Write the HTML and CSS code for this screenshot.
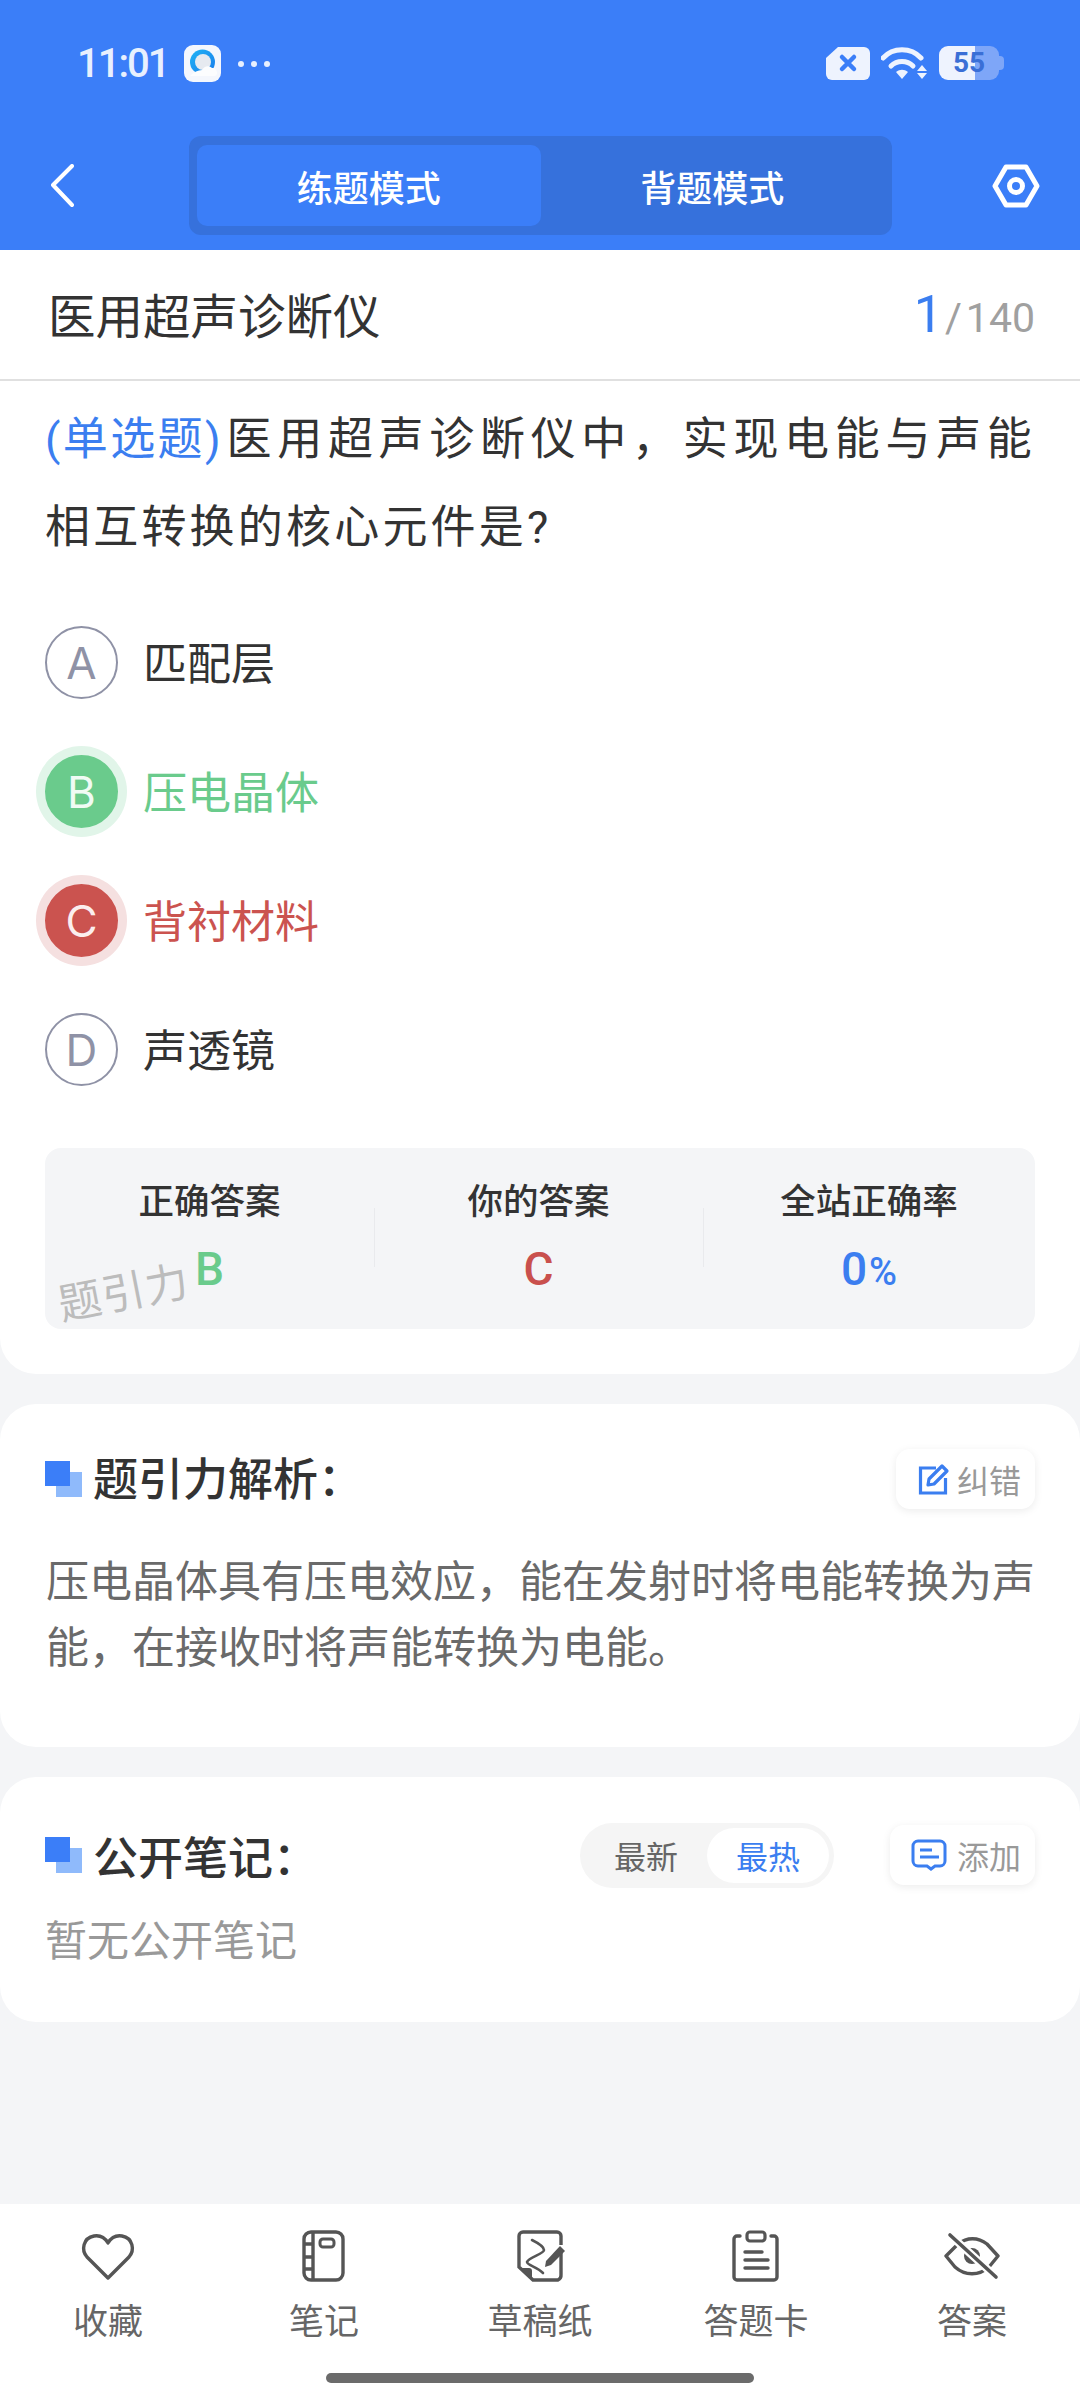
FILE: index.html
```html
<!DOCTYPE html>
<html lang="zh-CN">
<head>
  <meta charset="UTF-8" />
  <title>医用超声诊断仪</title>
  <link rel="stylesheet" href="styles.css">
</head>
<body>

<header class="top">
  <div class="status">
    <div class="status-left">
      <span class="time">11:01</span>
      <svg class="app-icon" width="37" height="37" viewBox="0 0 37 37">
        <defs>
          <linearGradient id="qb" x1="0" y1="0" x2="1" y2="1">
            <stop offset="0" stop-color="#1fb4f5"/>
            <stop offset="1" stop-color="#1a7cec"/>
          </linearGradient>
        </defs>
        <rect width="37" height="37" rx="9" fill="#f4f7fd"/>
        <circle cx="18.5" cy="17" r="12.5" fill="url(#qb)"/>
        <circle cx="19" cy="17" r="8" fill="#e6eaf0"/>
        <path d="M6 31c4-4 8-6 12-6 2-4 7-5 10-2 3 0 5 2 5 5 0 2-1 3-3 3H8z" fill="#fcfdfe"/>
      </svg>
      <span class="dots"><i></i><i></i><i></i></span>
    </div>
    <div class="status-right">
      <svg width="44" height="34" viewBox="0 0 44 34">
        <path d="M12 1h26a6 6 0 0 1 6 6v21a6 6 0 0 1-6 6H6a6 6 0 0 1-6-6V12z" fill="#eef3fe"/>
        <path d="M16 11l12 12M28 11L16 23" stroke="#3b7ef8" stroke-width="4.5" stroke-linecap="round"/>
      </svg>
      <svg width="47" height="34" viewBox="0 0 47 34">
        <path d="M2 12C12 1 30 1 40 12" fill="none" stroke="#eef3fe" stroke-width="5" stroke-linecap="round"/>
        <path d="M10 20c6-6 16-6 22 0" fill="none" stroke="#eef3fe" stroke-width="5" stroke-linecap="round"/>
        <path d="M15 26c4-3 8-3 12 0l-6 7z" fill="#eef3fe"/>
        <path d="M41 19l5 6H36zM36 27h10l-5 6z" fill="#eef3fe"/>
      </svg>
      <div class="battery">55</div>
    </div>
  </div>
  <nav class="nav">
    <svg class="back" width="24" height="44" viewBox="0 0 24 44">
      <path d="M22 2L3 21l19 20" fill="none" stroke="#fff" stroke-width="4" stroke-linecap="round" stroke-linejoin="round"/>
    </svg>
    <div class="seg">
      <div class="seg-item seg-on">练题模式</div>
      <div class="seg-item">背题模式</div>
    </div>
    <svg class="hex" width="48" height="44" viewBox="0 0 48 44">
      <path d="M3 22L14 3h20l11 19-11 19H14z" fill="none" stroke="#fff" stroke-width="5" stroke-linejoin="round"/>
      <circle cx="24" cy="22" r="6.5" fill="none" stroke="#fff" stroke-width="5"/>
    </svg>
  </nav>
</header>

<main class="main">
  <section class="card card-first">
    <div class="title-row">
      <span class="title">医用超声诊断仪</span>
      <span class="count"><b>1</b><em>/</em>140</span>
    </div>
    <div class="question">
      <div class="question-first"><span class="tag">(单选题)</span>医用超声诊断仪中，实现电能与声能</div>
      <div>相互转换的核心元件是?</div>
    </div>
    <ul class="options">
      <li class="option"><span class="letter">A</span>匹配层</li>
      <li class="option right"><span class="letter">B</span>压电晶体</li>
      <li class="option wrong"><span class="letter">C</span>背衬材料</li>
      <li class="option"><span class="letter">D</span>声透镜</li>
    </ul>
    <div class="answer">
      <div class="answer-col">
        <div class="answer-label">正确答案</div>
        <div class="answer-val green">B</div>
      </div>
      <div class="answer-col">
        <div class="answer-label">你的答案</div>
        <div class="answer-val red">C</div>
      </div>
      <div class="answer-col">
        <div class="answer-label">全站正确率</div>
        <div class="answer-val blue">0<small>%</small></div>
      </div>
      <span class="watermark">题引力</span>
    </div>
  </section>

  <section class="card card-analysis">
    <div class="head">
      <h3 class="head-title"><span class="mark"></span>题引力解析：</h3>
      <div class="mini-btn">
        <svg width="32" height="32" viewBox="0 0 32 32">
          <path d="M18 5H2.5v25h25V15" fill="none" stroke="#3b7ef0" stroke-width="3.2"/>
          <path d="M10 22l1-6L24 3l5 5-13 13z" fill="none" stroke="#3b7ef0" stroke-width="3.2" stroke-linejoin="round"/>
        </svg>
        纠错
      </div>
    </div>
    <p class="analysis-text">压电晶体具有压电效应，能在发射时将电能转换为声能，在接收时将声能转换为电能。</p>
  </section>

  <section class="card card-notes">
    <div class="head">
      <h3 class="head-title"><span class="mark"></span>公开笔记：</h3>
      <div class="head-right">
        <div class="sort">
          <span class="sort-item">最新</span>
          <span class="sort-item sort-on">最热</span>
        </div>
        <div class="mini-btn mini-add">
          <svg width="36" height="32" viewBox="0 0 36 32">
            <path d="M7 2h22a5 5 0 0 1 5 5v15a5 5 0 0 1-5 5h-5l-4 3-4-3H7a5 5 0 0 1-5-5V7a5 5 0 0 1 5-5z" fill="none" stroke="#3b7ef0" stroke-width="3"/>
            <path d="M9 11h12M9 18h19" stroke="#3b7ef0" stroke-width="3"/>
          </svg>
          添加
        </div>
      </div>
    </div>
    <p class="empty">暂无公开笔记</p>
  </section>
</main>

<footer class="tabs">
  <div class="tab-row">
    <div class="tab">
      <svg width="56" height="52" viewBox="0 0 56 52">
        <path d="M28 48L7 27C1 20 3 8 14 6c6-1 11 2 14 7 3-5 8-8 14-7 11 2 13 14 7 21z" fill="none" stroke="#555" stroke-width="3.4" stroke-linejoin="round"/>
      </svg>
      <span>收藏</span>
    </div>
    <div class="tab">
      <svg width="56" height="52" viewBox="0 0 56 52">
        <rect x="8" y="2" width="39" height="48" rx="7" fill="none" stroke="#555" stroke-width="3.4"/>
        <path d="M17 2v48M8 14h9M8 27h9M8 39h9" fill="none" stroke="#555" stroke-width="3.4"/>
        <rect x="24" y="9" width="14" height="8" rx="3" fill="none" stroke="#555" stroke-width="3"/>
      </svg>
      <span>笔记</span>
    </div>
    <div class="tab">
      <svg width="56" height="52" viewBox="0 0 56 52">
        <path d="M49 23v22a5 5 0 0 1-3 5H21L7 37V6a4 4 0 0 1 4-4h34a4 4 0 0 1 4 4v9" fill="none" stroke="#555" stroke-width="3.4"/>
        <path d="M8 38h9a3 3 0 0 1 3 3v8z" fill="#555"/>
        <path d="M20 10c6 3 12 7 12 10 0 4-15 7-17 12 0 3 10 5 16 11" fill="none" stroke="#555" stroke-width="2.6" stroke-linecap="round"/>
        <path d="M33 37l1-6 14-15 5 5-14 14z" fill="#555"/>
      </svg>
      <span>草稿纸</span>
    </div>
    <div class="tab">
      <svg width="56" height="52" viewBox="0 0 56 52">
        <path d="M12 6H9a3 3 0 0 0-3 3v38a3 3 0 0 0 3 3h37a3 3 0 0 0 3-3V9a3 3 0 0 0-3-3h-3" fill="none" stroke="#555" stroke-width="3.4" stroke-linecap="round"/>
        <rect x="19" y="2" width="18" height="9" rx="3" fill="none" stroke="#555" stroke-width="3.2"/>
        <path d="M17 22h17M17 30h23M17 38h23" stroke="#555" stroke-width="3.4" stroke-linecap="round"/>
      </svg>
      <span>答题卡</span>
    </div>
    <div class="tab">
      <svg width="56" height="52" viewBox="0 0 56 52">
        <path d="M14 14c9-7 20-7 29 0l11 12-9 11c-10 9-24 9-34 0L2 26z" fill="none" stroke="#555" stroke-width="3.4" stroke-linejoin="round"/>
        <circle cx="28" cy="26" r="8" fill="#555"/>
        <path d="M6 5l46 42" stroke="#fff" stroke-width="8"/>
        <path d="M6 5l46 42" stroke="#555" stroke-width="3.6" stroke-linecap="round"/>
      </svg>
      <span>答案</span>
    </div>
  </div>
  <div class="home-bar"></div>
</footer>

</body>
</html>
```
FILE: styles.css
```css
* {
  box-sizing: border-box;
}

html, body {
  margin: 0;
  padding: 0;
}

body {
  width: 1080px;
  height: 2400px;
  display: flex;
  flex-direction: column;
  background: #f4f5f7;
  font-family: Roboto, "Noto Sans CJK SC", sans-serif;
  color: #333;
  overflow: hidden;
}

/* 顶部蓝色区域 */
.top {
  height: 250px;
  background: #3b7ef8;
}

.status {
  height: 136px;
  padding: 45px 81px 0 77px;
  display: flex;
  justify-content: space-between;
  align-items: flex-start;
}

.status-left, .status-right {
  display: flex;
  align-items: center;
}

.status-left {
  height: 37px;
}

.time {
  font-size: 40px;
  font-weight: 500;
  letter-spacing: -2px;
  color: #e8f0fe;
  width: 107px;
}

.dots {
  display: flex;
  gap: 7px;
  margin-left: 17px;
}

.dots i {
  width: 6px;
  height: 6px;
  border-radius: 50%;
  background: #e8f0fe;
}

.status-right {
  gap: 11px;
  height: 36px;
}

.battery {
  position: relative;
  width: 60px;
  height: 34px;
  border-radius: 9px;
  background: linear-gradient(90deg, #eef3fe 36px, #7ea6f8 36px);
  color: #3a6fd6;
  font-size: 28px;
  font-weight: 700;
  line-height: 34px;
  text-align: center;
}

.battery::after {
  content: "";
  position: absolute;
  right: -5px;
  top: 10px;
  width: 5px;
  height: 14px;
  border-radius: 0 4px 4px 0;
  background: #7ea6f8;
}

.nav {
  display: grid;
  grid-template-columns: 189px 703px 1fr;
  height: 99px;
  align-items: center;
}

.back {
  margin-left: 50px;
}

.hex {
  margin-left: 100px;
}

.seg {
  height: 99px;
  padding: 9px 8px;
  display: flex;
  background: #3671dc;
  border-radius: 12px;
}

.seg-item {
  flex: 1;
  display: flex;
  align-items: center;
  justify-content: center;
  font-size: 36px;
  font-weight: 500;
  color: #fff;
  border-radius: 10px;
}

.seg-on {
  background: #3b7ef8;
}

.main {
  flex: 1;
}

.card {
  background: #fff;
  border-radius: 36px;
  padding: 0 45px;
}

.card-first {
  height: 1124px;
  border-radius: 0 0 36px 36px;
  padding-bottom: 45px;
}

.title-row {
  height: 131px;
  margin: 0 -45px;
  padding: 0 45px 2px 48px;
  border-bottom: 2px solid #e0e0e0;
  display: flex;
  justify-content: space-between;
  align-items: center;
}

.title {
  font-size: 47.5px;
  color: #333;
}

.count {
  font-size: 41px;
  color: #a0a0a0;
  padding-top: 2px;
}

.count b {
  font-size: 52px;
  font-weight: 400;
  color: #3b7ef0;
}

.count em {
  font-style: normal;
  margin: 0 4px 0 2px;
}

.question {
  margin-top: 15px;
  font-size: 45px;
  line-height: 88px;
  letter-spacing: 3.2px;
}

.question-first {
  text-align: justify;
  text-align-last: justify;
}

.tag {
  display: inline-block;
  color: #3b7ef0;
  letter-spacing: 2.4px;
  margin-right: 1px;
}

.options {
  list-style: none;
  margin: 25px 0 0;
  padding: 0;
}

.option {
  height: 129px;
  padding-bottom: 2px;
  display: flex;
  align-items: center;
  font-size: 44px;
  color: #333;
}

.letter {
  width: 73px;
  height: 73px;
  margin: 4px 25px 0 0;
  flex: none;
  display: flex;
  align-items: center;
  justify-content: center;
  border: 2px solid #8f92a6;
  border-radius: 50%;
  color: #8f92a6;
  font-family: Inter, sans-serif;
  font-size: 44px;
}

.right {
  color: #6acb8c;
}

.right .letter {
  background: #6acb8c;
  border-color: #6acb8c;
  color: #f0fbf4;
  box-shadow: 0 0 0 9px #e1f5e9;
}

.wrong {
  color: #cb534f;
}

.wrong .letter {
  background: #cb534f;
  border-color: #cb534f;
  color: #fbeeee;
  box-shadow: 0 0 0 9px #f5e0e0;
}

.answer {
  position: relative;
  margin-top: 35px;
  height: 181px;
  display: flex;
  background: #f4f5f7;
  border-radius: 16px;
}

.answer-col {
  width: 329px;
  padding-top: 31px;
  text-align: center;
  position: relative;
}

.answer-col:last-of-type {
  width: 332px;
}

.answer-col + .answer-col::before {
  content: "";
  position: absolute;
  left: 0;
  top: 60px;
  height: 59px;
  width: 1px;
  background: #e9eaed;
}

.answer-label {
  font-size: 35.5px;
  font-weight: 500;
  line-height: 46px;
  color: #333;
}

.answer-val {
  margin-top: 17px;
  font-size: 46px;
  font-weight: 500;
  line-height: 54px;
}

.answer-val small {
  font-size: 38px;
  margin-left: 2px;
}

.green { color: #6acb8c; }
.red { color: #c9504d; }
.blue { color: #3b7ef0; }

.watermark {
  position: absolute;
  left: 12px;
  top: 110px;
  font-size: 43px;
  color: #bcbcbc;
  letter-spacing: 1px;
  transform: rotate(-11deg);
}

.card-analysis {
  margin-top: 30px;
  height: 343px;
  padding-top: 45px;
}

.card-notes {
  margin-top: 30px;
  height: 245px;
  padding-top: 48px;
}

.head {
  display: flex;
  justify-content: space-between;
  align-items: center;
  height: 60px;
}

.head-title {
  margin: 0;
  display: flex;
  align-items: center;
  font-size: 45px;
  font-weight: 500;
  color: #333;
}

.card-analysis .head-title {
  padding-bottom: 5px;
}

.card-analysis .mark {
  margin-top: 5px;
}

.mark {
  position: relative;
  width: 37px;
  height: 36px;
  margin-right: 11px;
}

.mark::before {
  content: "";
  position: absolute;
  left: 11px;
  top: 11px;
  width: 26px;
  height: 25px;
  background: #8fbafb;
}

.mark::after {
  content: "";
  position: absolute;
  left: 0;
  top: 0;
  width: 25px;
  height: 25px;
  background: #3b7ef8;
}

.mini-btn {
  height: 60px;
  padding: 0 14px 0 22px;
  display: flex;
  align-items: center;
  gap: 7px;
  background: #fff;
  border-radius: 14px;
  box-shadow: 0 2px 8px rgba(0, 0, 0, 0.08);
  font-size: 32px;
  color: #999;
}

.mini-add {
  padding-left: 21px;
  gap: 10px;
}

.analysis-text {
  margin: 40px 0 0 1px;
  font-size: 43px;
  line-height: 66px;
  color: #6a6a6a;
}

.head-right {
  display: flex;
  align-items: center;
  gap: 56px;
}

.sort {
  width: 254px;
  height: 65px;
  padding: 5px;
  display: flex;
  align-items: center;
  background: #f5f5f5;
  border-radius: 33px;
}

.sort-item {
  flex: 1;
  height: 55px;
  display: flex;
  align-items: center;
  justify-content: center;
  font-size: 32px;
  color: #666;
  border-radius: 28px;
}

.sort-on {
  flex: none;
  width: 122px;
  background: #fff;
  color: #3b7ef0;
}

.empty {
  margin: 29px 0 0;
  font-size: 42px;
  line-height: 56px;
  color: #999;
}

/* 底部栏 */
.tabs {
  height: 196px;
  background: #fff;
}

.tab-row {
  display: flex;
  height: 169px;
  padding-top: 26px;
}

.tab {
  width: 216px;
  display: flex;
  flex-direction: column;
  align-items: center;
  font-size: 35px;
  color: #666;
}

.tab span {
  margin-top: 18px;
  line-height: 46px;
}

.home-bar {
  width: 428px;
  height: 10px;
  margin: 0 auto;
  background: #6b6b6b;
  border-radius: 5px;
}
```
